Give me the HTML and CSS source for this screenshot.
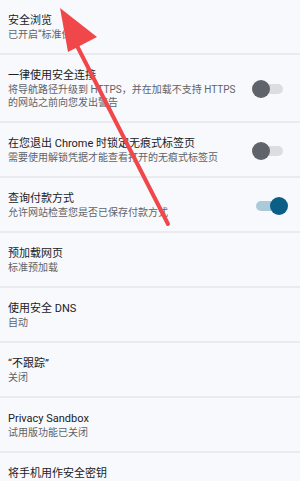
FILE: index.html
```html
<!DOCTYPE html>
<html lang="zh-CN">
<head>
  <meta charset="UTF-8">
  <meta name="viewport" content="width=device-width, initial-scale=1.0">
  <title>隐私和安全</title>
  <link rel="stylesheet" href="styles.css">
</head>
<body>
  <div class="settings-list">
    <div class="setting-row">
      <div class="setting-text">
        <div class="setting-title">安全浏览</div>
        <div class="setting-summary">已开启“标准保护”</div>
      </div>
    </div>
    <div class="setting-row">
      <div class="setting-text">
        <div class="setting-title">一律使用安全连接</div>
        <div class="setting-summary">将导航路径升级到 HTTPS，并在加载不支持 HTTPS 的网站之前向您发出警告</div>
      </div>
      <div class="switch"><span class="switch-track"></span><span class="switch-thumb"></span></div>
    </div>
    <div class="setting-row">
      <div class="setting-text">
        <div class="setting-title">在您退出 Chrome 时锁定无痕式标签页</div>
        <div class="setting-summary">需要使用解锁凭据才能查看打开的无痕式标签页</div>
      </div>
      <div class="switch"><span class="switch-track"></span><span class="switch-thumb"></span></div>
    </div>
    <div class="setting-row">
      <div class="setting-text">
        <div class="setting-title">查询付款方式</div>
        <div class="setting-summary">允许网站检查您是否已保存付款方式</div>
      </div>
      <div class="switch on"><span class="switch-track"></span><span class="switch-thumb"></span></div>
    </div>
    <div class="setting-row">
      <div class="setting-text">
        <div class="setting-title">预加载网页</div>
        <div class="setting-summary">标准预加载</div>
      </div>
    </div>
    <div class="setting-row">
      <div class="setting-text">
        <div class="setting-title">使用安全 DNS</div>
        <div class="setting-summary">自动</div>
      </div>
    </div>
    <div class="setting-row">
      <div class="setting-text">
        <div class="setting-title">“不跟踪”</div>
        <div class="setting-summary">关闭</div>
      </div>
    </div>
    <div class="setting-row">
      <div class="setting-text">
        <div class="setting-title">Privacy Sandbox</div>
        <div class="setting-summary">试用版功能已关闭</div>
      </div>
    </div>
    <div class="setting-row">
      <div class="setting-text">
        <div class="setting-title">将手机用作安全密钥</div>
      </div>
    </div>
  </div>

  <!-- red pointer drawn over the list -->
  <svg class="pointer" width="300" height="481" viewBox="0 0 300 481">
    <line x1="72" y1="36" x2="168" y2="224" stroke="#f0474a" stroke-width="4" stroke-linecap="round"/>
    <polygon points="60,8 97,37 68,52" fill="#f0474a"/>
  </svg>
</body>
</html>
```
FILE: styles.css
```css
body {
  margin: 0;
  font-family: Roboto, "Noto Sans CJK SC", sans-serif;
  background-color: #f8f9fc;
  color: #202124;
}

.settings-list {
  display: flex;
  flex-direction: column;
}

.setting-row {
  display: flex;
  align-items: center;
  gap: 10px;
  padding: 14px 12px 12px 8px;
  border-bottom: 2px solid #e9ebee;
}

.setting-text {
  flex: 1;
  min-width: 0;
}

.setting-title {
  font-size: 11px;
  line-height: 14px;
  color: #202124;
}

.setting-summary {
  font-size: 10px;
  line-height: 13px;
  color: #5f6368;
}

.switch {
  position: relative;
  flex: 0 0 36px;
  height: 18px;
}

.switch-track {
  position: absolute;
  left: 4px;
  right: 5px;
  top: 4px;
  height: 10px;
  border-radius: 5px;
  background-color: #dcdde1;
}

.switch-thumb {
  position: absolute;
  left: 0;
  top: 0;
  width: 18px;
  height: 18px;
  border-radius: 50%;
  background-color: #5f646b;
}

.switch.on .switch-track {
  background-color: #a9cad9;
}

.switch.on .switch-thumb {
  left: auto;
  right: 0;
  background-color: #0b5e86;
}

.pointer {
  position: absolute;
  left: 0;
  top: 0;
  pointer-events: none;
}
```
